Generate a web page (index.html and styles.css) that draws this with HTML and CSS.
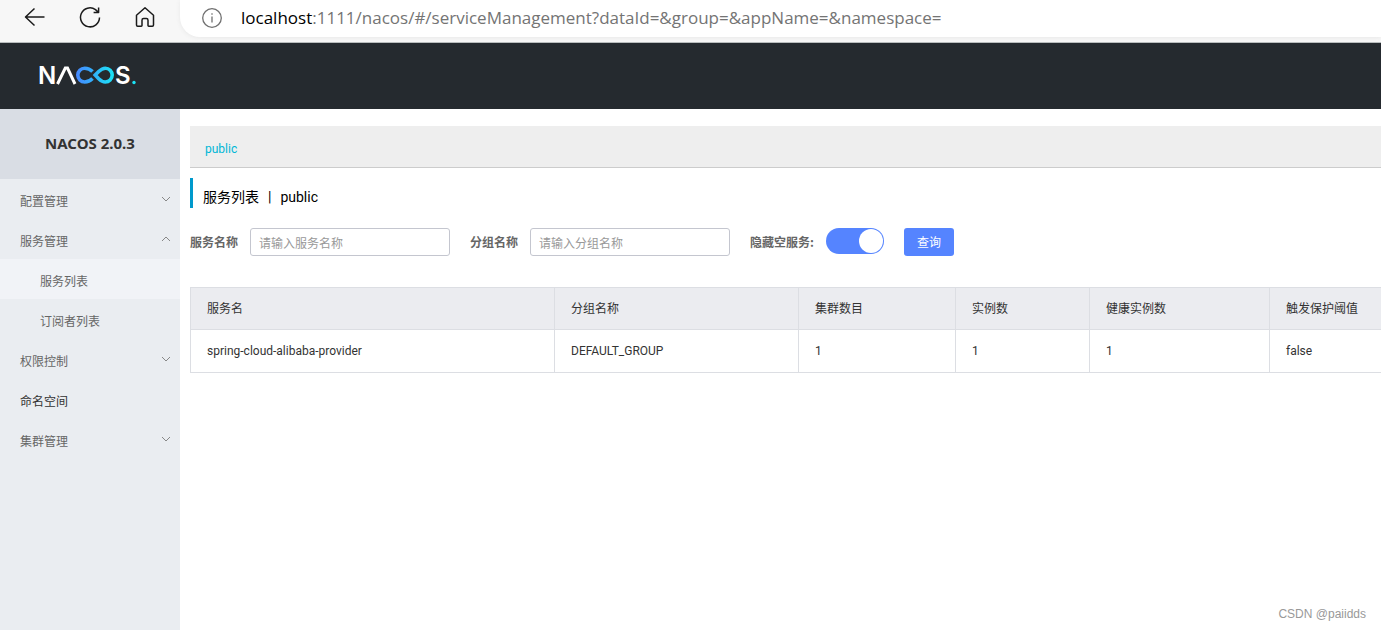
FILE: index.html
```html
<!DOCTYPE html>
<html lang="zh-CN">
<head>
<meta charset="utf-8">
<meta name="viewport" content="width=device-width, initial-scale=1">
<title>Nacos</title>
<link rel="stylesheet" href="styles.css">
</head>
<body>
<div class="toolbar">
  <div class="toolbar-nav">
    <button class="nav-button" type="button" aria-label="Back">
      <svg width="22" height="22" viewBox="0 0 22 22"><path d="M20.500 11H1.500M10.500 2.500L1.500 11l9 8.500"/></svg>
    </button>
    <button class="nav-button" type="button" aria-label="Refresh">
      <svg width="22" height="22" viewBox="0 0 22 22"><path d="M20.500 11.500a9.500 9.500 0 1 1-4-7.900l2.800 2.600M19.600 1.500v5h-5"/></svg>
    </button>
    <button class="nav-button" type="button" aria-label="Home">
      <svg width="22" height="22" viewBox="0 0 22 22"><path d="M2.500 9.200L11 1.800l8.500 7.400V19q0 1.200-1.200 1.200h-3.600q-.7 0-.7-.7v-5.300q0-1.700-1.600-1.700H9.600q-1.600 0-1.600 1.700v5.300q0 .7-.7.7H3.700q-1.200 0-1.200-1.200z"/></svg>
    </button>
  </div>
  <div class="address">
    <svg class="info-icon" width="20" height="20" viewBox="0 0 20 20"><circle cx="10" cy="10" r="9.300"/><path d="M10 8.500v6M10 5.200v1.500"/></svg>
    <span class="url"><span class="url-host">localhost</span>:1111/nacos/#/serviceManagement?dataId=&amp;group=&amp;appName=&amp;namespace=</span>
  </div>
</div>
<header class="header">
  <svg class="logo" width="102" height="40" viewBox="-3 -8 102 40" role="img" aria-label="NACOS">
    <defs>
      <linearGradient id="loop" gradientUnits="userSpaceOnUse" x1="37" y1="0" x2="75" y2="0">
        <stop offset="0" stop-color="#4687ff"/><stop offset="1" stop-color="#1be3f5"/>
      </linearGradient>
    </defs>
    <text class="logo-text" x="-1" y="20">N</text>
    <path class="logo-bar" d="M18.500 20L26.300 4h2.200L36 20"/>
    <path class="logo-loop" d="M53.500 7.600C51 5 48.600 4.200 45.700 4.200a6.900 6.900 0 0 0 0 13.800c3 0 5.300-.9 7.800-3.500M56.200 11.100l3.500-3.600C62.300 5 64 4.200 66.300 4.200a6.900 6.900 0 0 1 0 13.800c-2.300 0-4-.8-6.600-3.300z"/>
    <text class="logo-text" x="76" y="20">S</text>
    <circle class="logo-dot" cx="95" cy="18.500" r="1.700"/>
  </svg>
</header>
<div class="layout">
  <nav class="sidebar">
    <h1 class="version">NACOS 2.0.3</h1>
    <ul class="menu">
      <li><button class="menu-item" type="button">配置管理<svg class="chevron" width="10" height="6" viewBox="0 0 10 6"><path d="M1 1l4 4 4-4"/></svg></button></li>
      <li><button class="menu-item" type="button">服务管理<svg class="chevron" width="10" height="6" viewBox="0 0 10 6"><path d="M1 5l4-4 4 4"/></svg></button>
        <ul class="menu">
          <li><a class="menu-item menu-sub menu-active" href="#services">服务列表</a></li>
          <li><a class="menu-item menu-sub" href="#subscribers">订阅者列表</a></li>
        </ul>
      </li>
      <li><button class="menu-item" type="button">权限控制<svg class="chevron" width="10" height="6" viewBox="0 0 10 6"><path d="M1 1l4 4 4-4"/></svg></button></li>
      <li><a class="menu-item menu-link" href="#namespace">命名空间</a></li>
      <li><button class="menu-item" type="button">集群管理<svg class="chevron" width="10" height="6" viewBox="0 0 10 6"><path d="M1 1l4 4 4-4"/></svg></button></li>
    </ul>
  </nav>
  <main class="content">
    <div class="namespaces"><a class="namespace" href="#public">public</a></div>
    <h2 class="title"><span>服务列表</span><span>|</span><span>public</span></h2>
    <form class="filters">
      <div class="field"><label for="service">服务名称</label><input class="text-input" id="service" type="text" placeholder="请输入服务名称"></div>
      <div class="field"><label for="group">分组名称</label><input class="text-input" id="group" type="text" placeholder="请输入分组名称"></div>
      <div class="field"><label for="hide-empty">隐藏空服务:</label><input class="switch" id="hide-empty" type="checkbox" role="switch" checked></div>
      <button class="search" type="button">查询</button>
    </form>
    <table class="table">
      <colgroup><col class="col-name"><col class="col-group"><col class="col-cluster"><col class="col-instance"><col class="col-healthy"><col></colgroup>
      <thead><tr><th>服务名</th><th>分组名称</th><th>集群数目</th><th>实例数</th><th>健康实例数</th><th>触发保护阈值</th></tr></thead>
      <tbody><tr><td>spring-cloud-alibaba-provider</td><td>DEFAULT_GROUP</td><td>1</td><td>1</td><td>1</td><td>false</td></tr></tbody>
    </table>
  </main>
</div>
<div class="watermark">CSDN @paiidds</div>
</body>
</html>
```
FILE: styles.css
```css
* { box-sizing: border-box; }

body {
  display: flex;
  flex-direction: column;
  min-height: 100vh;
  margin: 0;
  background: #fff;
  color: #333;
  font: 12px/20px Roboto, "Noto Sans CJK SC", sans-serif;
}

button, input { font: inherit; }
button { cursor: pointer; }
a { text-decoration: none; }

.toolbar {
  display: flex;
  height: 43px;
  border-bottom: 1px solid #b9bdbe;
  background: #f7f7f7;
}

.toolbar-nav {
  display: flex;
  gap: 33px;
  width: 180px;
  padding-left: 24px;
}

.nav-button {
  width: 22px;
  height: 34px;
  padding: 0;
  border: 0;
  background: none;
}

.nav-button svg {
  display: block;
  fill: none;
  stroke: #1b1b1b;
  stroke-width: 1.5;
  stroke-linejoin: round;
}

.address {
  display: flex;
  flex: 1;
  align-items: center;
  gap: 19px;
  height: 37px;
  padding: 0 0 2px 22px;
  border-radius: 0 0 0 20px;
  background: #fff;
  box-shadow: 0 1px 4px #e8e8e8;
}

.info-icon {
  fill: none;
  stroke: #707070;
  stroke-width: 1.3;
}

.url {
  color: #747474;
  font: 17px/24px "Open Sans", sans-serif;
  white-space: nowrap;
}

.url-host { color: #000; }

.header {
  display: flex;
  align-items: center;
  height: 66px;
  padding-left: 36px;
  background: #252a2f;
}

.logo-text {
  fill: #fff;
  font: 600 24px "Inter", sans-serif;
}

.logo-bar, .logo-loop {
  fill: none;
  stroke: #fff;
  stroke-width: 3;
}

.logo-loop {
  stroke: url(#loop);
  stroke-width: 3.6;
}

.logo-dot { fill: #1be3f5; }

.layout {
  display: flex;
  flex: 1;
}

.sidebar {
  flex: 0 0 180px;
  background: #eaedf1;
}

.version {
  height: 70px;
  margin: 0;
  background: #d9dde4;
  font: 700 15px/68px "Noto Sans", sans-serif;
  text-align: center;
}

.menu {
  margin: 0;
  padding: 0;
  list-style: none;
}

.menu-item {
  display: flex;
  align-items: center;
  justify-content: space-between;
  width: 100%;
  height: 40px;
  padding: 6px 9px 0 20px;
  border: 0;
  background: none;
  color: #666;
}

.menu-sub { padding-left: 40px; }
.menu-active { background: #f1f3f7; }
.menu-link { color: #333; }

.chevron {
  margin-bottom: 6px;
  fill: none;
  stroke: #888;
}

.content {
  flex: 1;
  min-width: 0;
  padding: 17px 0 0 10px;
  overflow: hidden;
}

.namespaces {
  height: 42px;
  padding: 13px 15px 8px;
  border-bottom: 1px solid #ccc;
  background: #eee;
}

.namespace { color: #00b7d6; }

.title {
  display: flex;
  gap: 9px;
  height: 30px;
  margin: 10px 0 20px;
  padding: 4px 0 0 10px;
  border-left: 3px solid #09c;
  color: #000;
  font-size: 14px;
  font-weight: 400;
  line-height: 30px;
}

.filters {
  display: flex;
  gap: 20px;
}

.field {
  display: flex;
  align-items: center;
  gap: 12px;
  height: 28px;
  color: #666;
  font-family: "Noto Sans CJK SC", sans-serif;
  font-weight: 700;
}

.text-input {
  width: 200px;
  height: 28px;
  padding: 0 8px;
  border: 1px solid #c4c6cf;
  border-radius: 3px;
  background: #fff;
  color: #333;
  font-weight: 400;
}

.text-input::placeholder { color: #999; }

.switch {
  display: flex;
  width: 58px;
  height: 26px;
  margin: 0 0 2px;
  padding: 1px;
  border-radius: 13px;
  background: #5584ff;
  appearance: none;
}

.switch::before {
  width: 24px;
  height: 24px;
  border-radius: 50%;
  background: #fff;
  content: "";
}

.switch:checked { justify-content: flex-end; }

.search {
  width: 50px;
  height: 28px;
  padding: 0;
  border: 0;
  border-radius: 3px;
  background: #5584ff;
  color: #fff;
  font-family: "Noto Sans CJK SC", sans-serif;
}

.table {
  width: 100%;
  margin-top: 31px;
  border: 1px solid #dcdee3;
  border-right: 0;
  border-collapse: collapse;
  table-layout: fixed;
}

.col-name { width: 364px; }
.col-group { width: 244px; }
.col-cluster { width: 157px; }
.col-instance { width: 134px; }
.col-healthy { width: 180px; }

.table th, .table td {
  padding: 11px 0 10px 16px;
  border-bottom: 1px solid #dcdee3;
  border-left: 1px solid #dcdee3;
  font-weight: 400;
  text-align: left;
  white-space: nowrap;
}

.table td { padding-bottom: 11px; }
.table th { background: #ebecf0; }

.watermark {
  position: absolute;
  right: 15px;
  bottom: 6px;
  color: #999;
  font: 12px/20px "Liberation Sans", sans-serif;
}
```
